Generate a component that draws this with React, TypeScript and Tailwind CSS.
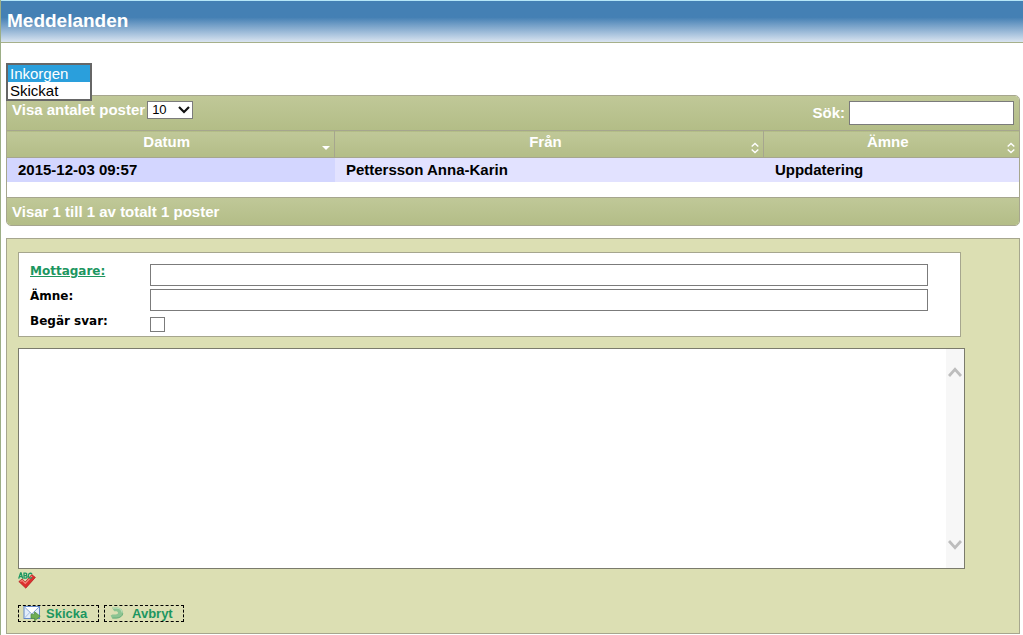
import { useState } from "react";

const bar = "bg-linear-to-b from-[#c0c898] to-[#b3bd87]";

const columns = [
  { label: "Datum", width: "w-[32.4%]", sorted: true },
  { label: "Från", width: "w-[42.4%]", sorted: false },
  { label: "Ämne", width: "w-[25.2%]", sorted: false },
];

const rows = [
  { date: "2015-12-03 09:57", from: "Pettersson Anna-Karin", subject: "Uppdatering" },
];

const SortIcon = ({ sorted }: { sorted: boolean }) =>
  sorted ? (
    <svg width="8" height="12" viewBox="0 0 8 12" aria-hidden="true">
      <path d="M0 4h8L4 8z" fill="#fff" />
    </svg>
  ) : (
    <svg width="8" height="12" viewBox="0 0 8 12" fill="none" stroke="#fff" strokeWidth="1.4" aria-hidden="true">
      <path d="M.7 4.6 4 1.4l3.3 3.2M.7 7.4 4 10.6l3.3-3.2" />
    </svg>
  );

const ScrollArrow = ({ down = false }: { down?: boolean }) => (
  <svg width="14" height="10" viewBox="0 0 14 10" fill="none" stroke="#bdbdbd" strokeWidth="2.8" aria-hidden="true">
    <path d={down ? "M1 1 7 7.6 13 1" : "M1 9 7 2.4 13 9"} />
  </svg>
);

const SpellCheckIcon = () => (
  <svg width="18" height="18" viewBox="0 0 18 18" aria-hidden="true">
    <path d="M.8 9.6 4.2 7l3 3 6.6-7.4 3.6 2.8-9.6 10.8z" fill="#dd2f2f" stroke="#b02020" strokeWidth=".7" />
    <path d="M2.4 9.5 4.2 8.4l3.1 3 6.7-7.3" fill="none" stroke="#f58a80" strokeWidth="1.2" />
    <g fill="none" stroke="#1c9660" strokeWidth="1.3">
      <path d="M.7 6.6 2.6 1h.5l1.6 5.6M1.4 4.7h2.7" />
      <path d="M6 1.1v5h1.6c2.1 0 2-2.5.3-2.5H6h1.5c1.7 0 1.7-2.5 0-2.5z" />
      <path d="M14 2.1c-1.3-1.5-3.6-.9-3.6 1.6s2.1 3 3.3 1.7" />
    </g>
  </svg>
);

const SendIcon = () => (
  <svg width="18" height="16" viewBox="0 0 18 16" aria-hidden="true">
    <rect x="1" y="1.5" width="15.5" height="12" fill="#e3eefb" stroke="#6288c8" />
    <path d="M1.5 13 7 7.3M16 13l-5.5-5.7" stroke="#a9bfdf" />
    <path d="M1.5 2 8.8 9 16 2" fill="#fff" stroke="#86a5d6" />
    <path d="M8 9.2h3.6V6.8l5.6 4.4-5.6 4.6v-2.4H8z" fill="#6fae55" stroke="#4b8a3c" strokeWidth=".7" />
  </svg>
);

const CancelIcon = () => (
  <svg width="14" height="14" viewBox="0 0 14 14" aria-hidden="true">
    <path
      d="M2 1.4h4.4c3.8 0 6.6 2.4 6.6 5.4s-2.8 5.6-6.6 5.6H2.2L.6 9.4l1.8-1h3.2c1.6 0 2.4-.7 2.4-1.6S7.2 5.2 5.6 5.2H4.2z"
      fill="#8cc492"
    />
    <path d="M3 2.2h3.4c3.2 0 5.6 1.9 5.6 4.4" fill="none" stroke="#b9dcb6" strokeWidth="1.2" />
    <path d="M2.4 12h4c3.4 0 6.2-2 6.4-4.6" fill="none" stroke="#67ab76" strokeWidth=".9" />
  </svg>
);

const textInput = "h-[22px] w-full border border-[#7b7b7b] bg-white px-1 text-sm outline-none";
const actionButton =
  "flex h-[17px] items-center border border-dashed border-black text-[13px] leading-[15px] font-bold text-[#1c9660]";

const MessageList = () => (
  <section className="rounded-[5px] border border-[#a6a68e] text-[15px] leading-[18px] font-bold">
    <div className={`flex h-[34px] items-start justify-between rounded-t-[4px] pr-[5px] pl-[5px] text-white ${bar}`}>
      <div className="flex items-center pt-[5px]">
        <label htmlFor="page-size">Visa antalet poster</label>
        <div className="relative ml-[2px]">
          <select
            id="page-size"
            defaultValue="10"
            className="block h-[18px] w-[46px] appearance-none border border-[#7b7b7b] bg-white pl-1 text-[13px] leading-4 font-normal text-black"
          >
            <option>10</option>
            <option>25</option>
            <option>50</option>
          </select>
          <svg
            className="pointer-events-none absolute top-[5px] right-[3px]"
            width="12"
            height="8"
            viewBox="0 0 12 8"
            fill="none"
            stroke="#111"
            strokeWidth="2.2"
            aria-hidden="true"
          >
            <path d="m1 1 5 5 5-5" />
          </svg>
        </div>
      </div>
      <div className="flex items-center pt-[5px]">
        <label htmlFor="search">Sök:</label>
        <input
          id="search"
          type="search"
          className="ml-1 h-6 w-[165px] border border-[#7b7b7b] bg-white px-1 text-sm font-normal text-black outline-none"
        />
      </div>
    </div>
    <table className="w-full table-fixed border-collapse">
      <thead>
        <tr className={`h-[27px] border-y border-[#a6a68e] text-white ${bar}`}>
          {columns.map((col) => (
            <th key={col.label} className={`border-r border-[#a6a68e] p-0 last:border-r-0 ${col.width}`}>
              <div className="flex items-end px-1 pb-px">
                <span className="flex-1 pb-[3px]">{col.label}</span>
                <SortIcon sorted={col.sorted} />
              </div>
            </th>
          ))}
        </tr>
      </thead>
      <tbody>
        {rows.map((row) => (
          <tr key={row.date} className="h-6 bg-[#e2e2ff] text-black">
            <td className="bg-[#d3d6ff] px-[11px]">{row.date}</td>
            <td className="px-[11px]">{row.from}</td>
            <td className="px-[11px]">{row.subject}</td>
          </tr>
        ))}
      </tbody>
    </table>
    <div className={`mt-[15px] h-7 rounded-b-[4px] border-t border-[#a6a68e] px-[5px] pt-[5px] text-white ${bar}`}>
      Visar 1 till 1 av totalt 1 poster
    </div>
  </section>
);

const MessageForm = () => (
  <form
    className="mt-3 border border-[#a6a68e] bg-[#dcdfb3] pt-[13px] pb-[11px] pl-[11px]"
    onSubmit={(e) => e.preventDefault()}
  >
    <div className="mr-[58px] grid grid-cols-[120px_1fr] gap-y-[3px] border border-[#a6a68e] bg-white pt-[11px] pr-8 pb-1 pl-[11px] font-['DejaVu_Sans',Verdana,sans-serif] text-[12px] leading-[15px] font-bold">
      <a href="#recipients" className="text-[#1c9660] underline">
        Mottagare:
      </a>
      <input aria-label="Mottagare" type="text" className={textInput} />
      <label htmlFor="subject">Ämne:</label>
      <input id="subject" type="text" className={textInput} />
      <label htmlFor="reply">Begär svar:</label>
      <div className="pt-[3px]">
        <input
          id="reply"
          type="checkbox"
          className="block size-[15px] appearance-none border border-[#7b7b7b] bg-white checked:bg-[#1c9660]"
        />
      </div>
    </div>

    <div className="mt-[11px] mr-[54px] flex h-[221px] border border-[#7b7b6c] bg-white">
      <textarea aria-label="Meddelande" className="flex-1 resize-none p-1 text-sm outline-none" />
      <div className="flex w-[18px] flex-col items-center justify-between bg-[#f7f7f7] py-[18px]">
        <ScrollArrow />
        <ScrollArrow down />
      </div>
    </div>

    <button type="button" aria-label="Stavningskontroll" className="mt-[3px] block">
      <SpellCheckIcon />
    </button>

    <div className="mt-[15px] flex gap-[5px]">
      <button type="submit" className={`${actionButton} w-[81px] gap-[5px] pl-1`}>
        <SendIcon />
        Skicka
      </button>
      <button type="button" className={`${actionButton} w-[80px] gap-2 pl-[5px]`}>
        <CancelIcon />
        Avbryt
      </button>
    </div>
  </form>
);

const App = () => {
  const [folder, setFolder] = useState("Inkorgen");

  return (
    <div className="min-h-screen border-l border-[#9cae86] bg-white font-['Liberation_Sans',Arial,sans-serif]">
      <header className="h-[43px] border-t border-b border-t-[#b5e6f7] border-b-[#a6b08a] bg-linear-to-b from-[#4480b4] from-40% to-[#d9e4f0] px-[6px] pt-[9px]">
        <h1 className="text-[19px] leading-[22px] font-bold text-white">Meddelanden</h1>
      </header>

      <main className="pt-5 pr-[3px] pl-[5px]">
        {/* Folder list sits on top of the table's upper edge */}
        <select
          size={2}
          aria-label="Mapp"
          value={folder}
          onChange={(e) => setFolder(e.target.value)}
          className="relative -mb-[6px] block h-[38px] w-[86px] overflow-hidden border-2 border-[#666] bg-white p-0 text-[15px] leading-[17px]"
        >
          {["Inkorgen", "Skickat"].map((name) => (
            <option
              key={name}
              className="h-[17px] min-h-0 px-[2px] py-0 checked:bg-linear-to-r checked:from-[#2a9fdc] checked:to-[#2a9fdc] checked:[-webkit-text-fill-color:white]"
            >
              {name}
            </option>
          ))}
        </select>
        <MessageList />
        <MessageForm />
      </main>
    </div>
  );
};

export default App;
